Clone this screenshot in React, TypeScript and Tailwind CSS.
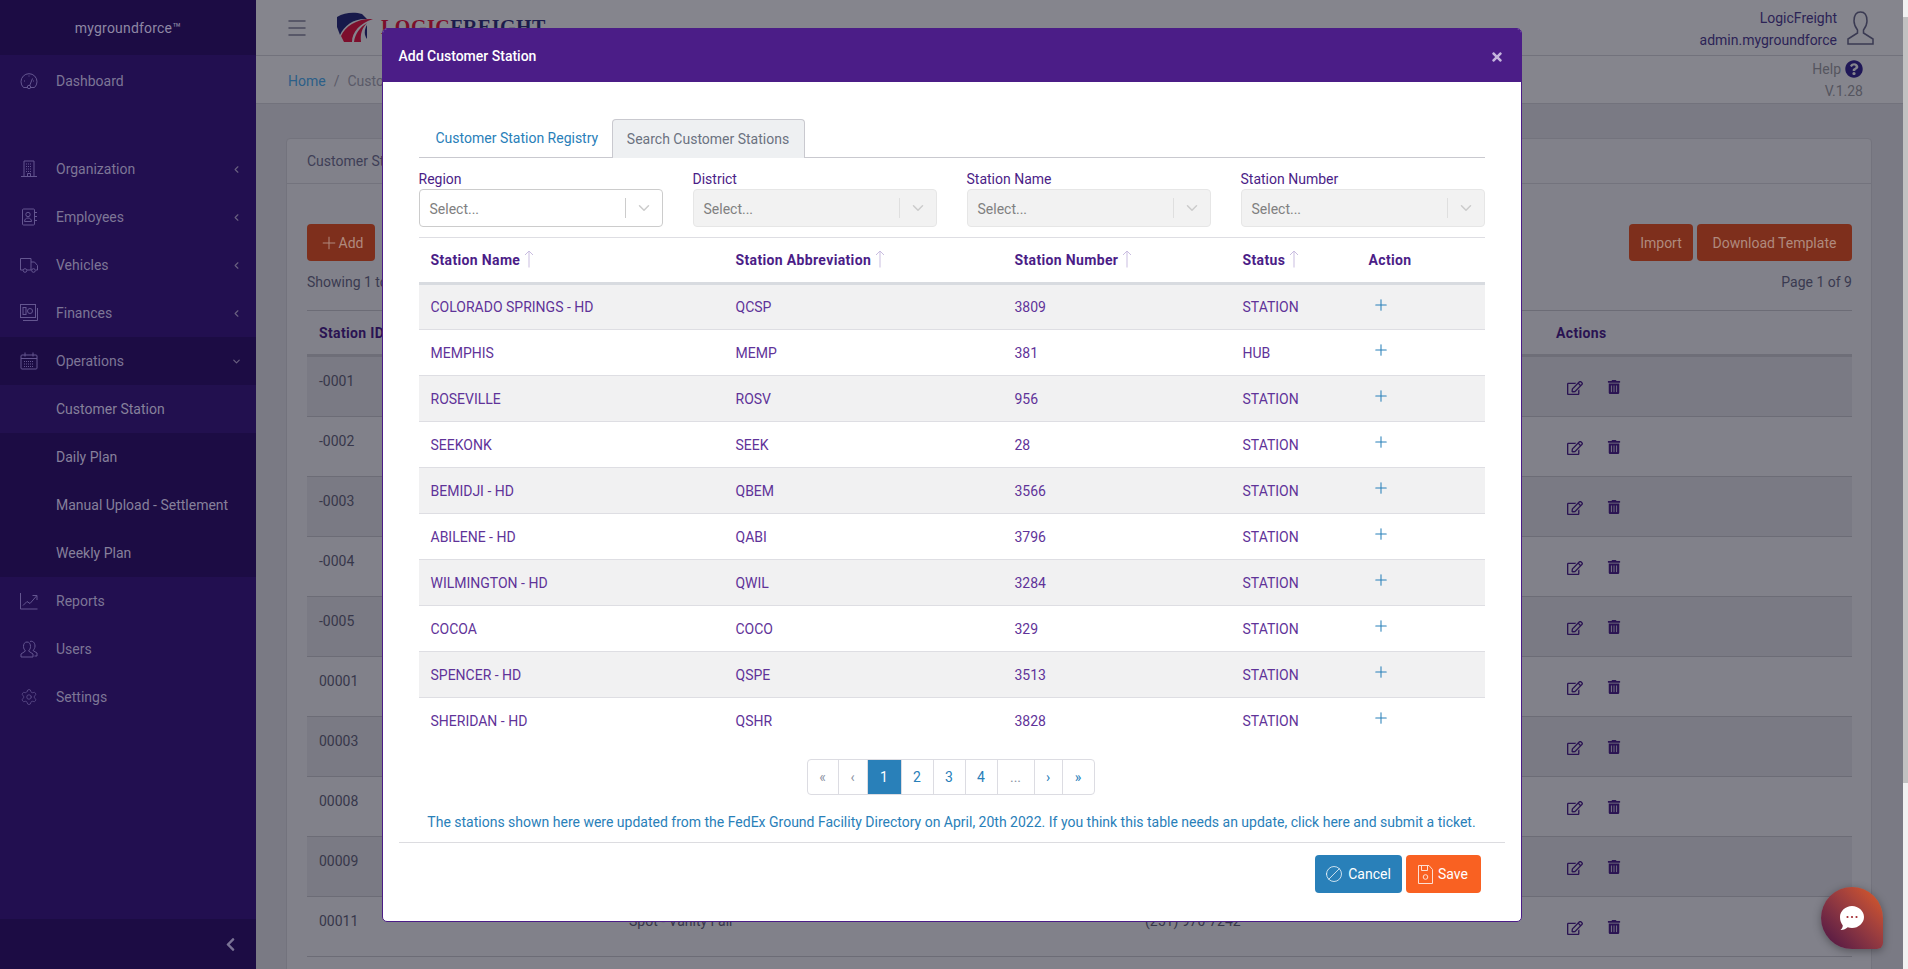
import { Ban, ChevronDown, ChevronLeft, Menu, Plus, Settings } from 'lucide-react';
import { FaChevronLeft, FaQuestionCircle, FaRegEdit, FaTimes, FaTrashAlt } from 'react-icons/fa';

const stations = [
  ['COLORADO SPRINGS - HD', 'QCSP', '3809', 'STATION'],
  ['MEMPHIS', 'MEMP', '381', 'HUB'],
  ['ROSEVILLE', 'ROSV', '956', 'STATION'],
  ['SEEKONK', 'SEEK', '28', 'STATION'],
  ['BEMIDJI - HD', 'QBEM', '3566', 'STATION'],
  ['ABILENE - HD', 'QABI', '3796', 'STATION'],
  ['WILMINGTON - HD', 'QWIL', '3284', 'STATION'],
  ['COCOA', 'COCO', '329', 'STATION'],
  ['SPENCER - HD', 'QSPE', '3513', 'STATION'],
  ['SHERIDAN - HD', 'QSHR', '3828', 'STATION'],
];

const backIds = ['-0001', '-0002', '-0003', '-0004', '-0005', '00001', '00003', '00008', '00009', '00011'];

const Line = ({ children }: { children: React.ReactNode }) => (
  <svg width="18" height="18" viewBox="0 0 18 18" fill="none" stroke="currentColor" strokeWidth="1">
    {children}
  </svg>
);

const DashboardIcon = () => (
  <Line>
    <path d="M3.500 15.500a8 8 0 1 1 11 0H11M7 15.500H3.500" />
    <circle cx="9" cy="15" r="1.700" />
    <path d="M9.700 13.500L12.500 6.500M4 9h1M9 3.500v1M14 9h-1" />
  </Line>
);

const BuildingIcon = () => (
  <Line>
    <path d="M4 16.500V1h10v15.500M1 16.500h16M7.500 16.500v-3h3v3" />
    <path d="M6 4h6M6 6.500h6M6 9h6M6 11.500h6" strokeDasharray="1 1" />
  </Line>
);

const EmployeesIcon = () => (
  <Line>
    <rect x="2.500" y="1" width="12" height="16" rx="1" />
    <path d="M14.500 4.500h2.500M14.500 8.500h2.500M14.500 12.500h2.500" />
    <circle cx="8" cy="6.500" r="2.200" />
    <path d="M4.500 13.500c0-2.200 1.500-3.500 3.500-3.500s3.500 1.300 3.500 3.500z" />
  </Line>
);

const TruckIcon = () => (
  <Line>
    <path d="M3 14H.5V2.500h10.500V14H7M11 6h3.500l3 3.500V14h-1.500M11 14h.5" />
    <circle cx="5" cy="14.500" r="1.800" />
    <circle cx="13.500" cy="14.500" r="1.800" />
  </Line>
);

const FinanceIcon = () => (
  <Line>
    <rect x="0.500" y="0.500" width="15" height="13" />
    <rect x="3" y="3.500" width="3" height="7" />
    <circle cx="10" cy="7" r="2.500" />
    <path d="M3 16.500h14.500V4" />
  </Line>
);

const CalendarIcon = () => (
  <Line>
    <rect x="1" y="3" width="16" height="14" rx="1" />
    <path d="M5 .5v4M13 .5v4M1 6.500h16" />
    <path d="M4 9.500h10M4 12h10M4 14.500h10" strokeDasharray="1 1" />
  </Line>
);

const ReportsIcon = () => (
  <Line>
    <path d="M.5 1v16h17" />
    <path d="M3 13.500l4-4 3 2 6.500-7.500M12.500 3.500h4.500V8" />
  </Line>
);

const UsersIcon = () => (
  <Line>
    <path d="M7 2C4.500 2 3.500 4 3.500 6.500c0 2 1 3.500 2 4.500L1 14v3h12v-3l-4.500-3c1-1 2-2.500 2-4.500C10.500 4 9.500 2 7 2z" />
    <path d="M10 1.500c2.500-1 5 1 5 4.500 0 2-1 3.500-2 4.500l4 2.500v3h-2.500" />
  </Line>
);

const SaveIcon = () => (
  <svg width="15" height="19" viewBox="0 0 15 19" fill="none" stroke="currentColor" strokeWidth="1" className="opacity-80">
    <path d="M.5.5h10.500l3.500 4v14H.5z" />
    <path d="M3.500.5v5h6v-5" />
    <circle cx="7.500" cy="12" r="2.300" />
  </svg>
);

const ProfileIcon = () => (
  <svg width="27" height="34" viewBox="0 0 27 34" fill="none" stroke="#3a3a52" strokeWidth="1.500">
    <path d="M13.500 1C9 1 7 5 7 10c0 4 2 7 3.500 9v3L1 28v5h25v-5l-9.500-6v-3C18 17 20 14 20 10c0-5-2-9-6.500-9z" />
  </svg>
);

const SortArrow = () => (
  <svg width="10" height="18" viewBox="0 0 10 18" fill="none" stroke="#c9bde0" strokeWidth="1" className="-mt-[3px]">
    <path d="M5 17.500V1M1 5l4-4 4 4" />
  </svg>
);

const Logo = () => (
  <svg width="36" height="30" viewBox="0 0 36 30" className="shrink-0">
    <path d="M0 5C8 0 18 0 25 2L30 7C18 6 7 13 3 23L0 15Z" fill="#17194a" />
    <path d="M36 7C21 6 8 14 4 24L7 30H15C15 20 23 11 36 7Z" fill="#7c0e2c" />
    <path d="M30 11C23 15 18 22 17 30H24C23 22 25 16 30 11Z" fill="#7c0e2c" />
    <path d="M30 13C27 18 27 23 30 27Z" fill="#17194a" />
  </svg>
);

const SideItem = ({ icon, label, arrow, open }: { icon: React.ReactNode; label: string; arrow?: boolean; open?: boolean }) => (
  <div className={`h-12 flex items-center pl-5 pr-[14px] text-[#7d7696] ${open ? 'bg-[#1c0c44]' : ''}`}>
    <span className="w-9 text-[#645690]">{icon}</span>
    <span className="flex-1">{label}</span>
    {arrow && (open ? <ChevronDown size={11} strokeWidth={2.500} className="text-[#6a6080]" /> : <ChevronLeft size={11} strokeWidth={2.500} className="text-[#6a6080]" />)}
  </div>
);

const SubItem = ({ label, active }: { label: string; active?: boolean }) => (
  <div className={`h-12 flex items-center pl-14 text-[#86809b] ${active ? 'bg-[#22104f]' : ''}`}>{label}</div>
);

const Sidebar = () => (
  <aside className="w-64 h-full shrink-0 flex flex-col bg-[#220f50]">
    <div className="h-[55px] mb-[2px] shrink-0 flex items-center justify-center tracking-[0.2px] bg-[#1c0c44] text-[#8e88a4]">mygroundforce™</div>
    <SideItem icon={<DashboardIcon />} label="Dashboard" />
    <div className="mt-10" />
    <SideItem icon={<BuildingIcon />} label="Organization" arrow />
    <SideItem icon={<EmployeesIcon />} label="Employees" arrow />
    <SideItem icon={<TruckIcon />} label="Vehicles" arrow />
    <SideItem icon={<FinanceIcon />} label="Finances" arrow />
    <div className="bg-[#1c0c44]">
      <SideItem icon={<CalendarIcon />} label="Operations" arrow open />
      <SubItem label="Customer Station" active />
      <SubItem label="Daily Plan" />
      <SubItem label="Manual Upload - Settlement" />
      <SubItem label="Weekly Plan" />
    </div>
    <SideItem icon={<ReportsIcon />} label="Reports" />
    <SideItem icon={<UsersIcon />} label="Users" />
    <SideItem icon={<Settings size={18} strokeWidth={1} />} label="Settings" />
    <div className="mt-auto h-[50px] flex items-center justify-end pr-[18px] bg-[#1c0c44] text-[#7a7395]">
      <FaChevronLeft size={15} />
    </div>
  </aside>
);

const BackPage = () => (
  <main className="flex-1 min-w-0 h-full flex flex-col bg-[#7a7a84]">
    <header className="h-14 shrink-0 flex items-center pl-[29px] pr-[29px] bg-[#85858d] border-b border-[#72727c]">
      <Menu size={24} strokeWidth={1.500} className="text-[#4a4a5c]" />
      <div className="ml-[28px] flex items-center self-start pt-3">
        <Logo />
        <span className="ml-2 font-['Liberation_Serif',serif] font-bold text-[20px] leading-none tracking-[0.5px] text-[#7c0f2b]">
          LOGIC<span className="text-[#1c1c4c]">FREIGHT</span>
        </span>
      </div>
      <div className="ml-auto flex items-center gap-[10px] text-right text-[#2c2356]">
        <div className="leading-[22px] pt-[2px]">
          <div>LogicFreight</div>
          <div>admin.mygroundforce</div>
        </div>
        <ProfileIcon />
      </div>
    </header>
    <div className="h-12 shrink-0 flex items-center justify-between pl-8 pr-[40px] bg-[#85858d] border-b border-[#72727c]">
      <div className="pt-[2px] text-[#5a5a68]">
        <span className="text-[#2c5f88]">Home</span>
        <span className="mx-2">/</span>
        Customer Station
      </div>
      <div className="text-right text-[#55555f] leading-[22px]">
        <div className="flex items-center justify-end gap-1">
          Help <FaQuestionCircle size={18} className="text-[#1f1757]" />
        </div>
        <div>V.1.28</div>
      </div>
    </div>
    <section className="mt-[34px] ml-[30px] mr-[31px] h-[900px] shrink-0 bg-[#81818a] border border-[#73737d] rounded-t">
      <div className="h-[45px] flex items-center pl-5 border-b border-[#73737d] text-[#3e3e56]">Customer Station</div>
      <div className="pl-5 pr-[19px] pt-10">
        <div className="flex items-center gap-1 h-[37px]">
          <button className="h-[37px] w-[68px] rounded bg-[#7e2f1c] text-[#b08a7e] flex items-center justify-center">
            <Plus size={20} strokeWidth={1.200} />
            Add
          </button>
          <button className="ml-auto h-[37px] w-16 rounded bg-[#7e2f1c] text-[#b08a7e]">Import</button>
          <button className="h-[37px] w-[155px] rounded bg-[#7e2f1c] text-[#b08a7e]">Download Template</button>
        </div>
        <div className="mt-2 h-[26px] flex items-center justify-between text-[#3a3a50]">
          <span>Showing 1 to 10</span>
          <span>Page 1 of 9</span>
        </div>
        <div className="mt-[15px] border-t border-[#6c6c76]">
          <div className="h-[46px] flex items-center pl-3 border-b-[3px] border-[#6e6e78] font-bold tracking-[0.35px] text-[#2a1352]">
            <span className="flex-1">Station ID</span>
            <span className="w-[296px]">Actions</span>
          </div>
          {backIds.map((id, i) => (
            <div key={id} className={`h-[60px] flex pl-3 pt-[14px] border-b border-[#6c6c76] text-[#37374a] ${i % 2 === 0 ? 'bg-[#7a7a84]' : ''}`}>
              <span className="w-[310px]">{id}</span>
              <span className="w-[516px]">{i === 9 ? 'Spot - Vanity Fair' : ''}</span>
              <span className="w-[411px]">{i === 9 ? '(251) 970-7242' : ''}</span>
              <span className="w-[40px] h-fit -mt-px pl-[11px] pt-[10px] text-[#2a1352]"><FaRegEdit size={16} /></span>
              <span className="h-fit -mt-px pl-[11px] pt-[10px] text-[#2a1352]"><FaTrashAlt size={14} /></span>
            </div>
          ))}
        </div>
      </div>
    </section>
  </main>
);

const FilterSelect = ({ label, disabled }: { label: string; disabled?: boolean }) => (
  <div>
    <div className="h-[22px] leading-[22px] -mb-[1px] text-[#4b1d87]">{label}</div>
    <div className={`h-[38px] flex items-center rounded border ${disabled ? 'bg-[#f2f2f2] border-[#e6e6e6]' : 'bg-white border-[#cccccc]'}`}>
      <span className="flex-1 pl-[10px] pt-[1px] text-[#808080]">Select...</span>
      <span className={`w-px h-5 ${disabled ? 'bg-[#dfdfdf]' : 'bg-[#cccccc]'}`} />
      <ChevronDown size={18} strokeWidth={2} className="mx-[9px] text-[#cccccc]" />
    </div>
  </div>
);

const SortHead = ({ label, className }: { label: string; className: string }) => (
  <th className={`${className} pl-3 text-left font-bold tracking-[0.35px]`}>
    <span className="inline-flex items-center gap-1">
      {label}
      <SortArrow />
    </span>
  </th>
);

const pages = [
  { label: '«', w: 'w-[31px]', muted: true },
  { label: '‹', w: 'w-[29px]', muted: true },
  { label: '1', w: 'w-[34px]', active: true },
  { label: '2', w: 'w-[32px]' },
  { label: '3', w: 'w-[32px]' },
  { label: '4', w: 'w-[32px]' },
  { label: '...', w: 'w-[37px]', muted: true },
  { label: '›', w: 'w-[28px]' },
  { label: '»', w: 'w-[31px]' },
];

const StationModal = () => (
  <div className="absolute inset-0 z-10 flex justify-center pt-7">
    <div className="w-[1140px] h-[894px] flex flex-col bg-white border border-[#4b1d87] rounded-[5px] overflow-hidden">
      <div className="h-[54px] -mt-px -mx-px shrink-0 flex items-center justify-between pl-[17px] pr-[18px] bg-[#4b1d87] text-white">
        <span className="font-medium pt-[2px]">Add Customer Station</span>
        <FaTimes size={14} className="text-[#c4b4dc] mt-[4px]" />
      </div>
      <div className="flex-1 px-9 pt-[37px]">
        <div className="h-[39px] flex items-end border-b border-[#c9c9cf] pl-px">
          <div className="h-[38px] w-[192px] flex items-center pl-4 text-[#2980b9]">Customer Station Registry</div>
          <div className="h-[39px] w-[193px] -mb-px flex items-center justify-center rounded-t border border-b-0 border-[#c9c9cf] bg-[#eef0f2] text-[#6b7280]">
            Search Customer Stations
          </div>
        </div>
        <div className="mt-[10px] grid grid-cols-4 gap-[30px]">
          <FilterSelect label="Region" />
          <FilterSelect label="District" disabled />
          <FilterSelect label="Station Name" disabled />
          <FilterSelect label="Station Number" disabled />
        </div>
        <table className="mt-[10px] w-full table-fixed border-t border-[#dedee3] border-collapse">
          <thead>
            <tr className="h-[46px] text-[#4b1d87] border-b-[3px] border-[#d8dbe0]">
              <SortHead label="Station Name" className="w-[305px]" />
              <SortHead label="Station Abbreviation" className="w-[279px]" />
              <SortHead label="Station Number" className="w-[228px]" />
              <SortHead label="Status" className="w-[126px]" />
              <th className="pl-3 text-left font-bold tracking-[0.35px]">Action</th>
            </tr>
          </thead>
          <tbody>
            {stations.map((row, i) => (
              <tr key={row[0]} className={`h-[46px] text-[#5f3399] ${i < 9 ? 'border-b border-[#dedee3]' : ''} ${i % 2 === 0 ? 'bg-[#f1f1f2]' : ''}`}>
                {row.map((cell) => (
                  <td key={cell} className="pl-3">{cell}</td>
                ))}
                <td className="pl-[15px]">
                  <Plus size={18} strokeWidth={1.400} className="text-[#2980b9] -mt-[5px]" />
                </td>
              </tr>
            ))}
          </tbody>
        </table>
        <nav className="mt-[15px] pr-[2px] flex justify-center">
          <div className="flex h-9 rounded border border-[#dcdce2] overflow-hidden">
            {pages.map((p) => (
              <span
                key={p.label}
                className={`${p.w} flex items-center justify-center border-r border-[#dcdce2] last:border-r-0 ${p.active ? 'bg-[#2980b9] text-white' : p.muted ? 'text-[#8c93a3]' : 'text-[#2980b9]'}`}
              >
                {p.label}
              </span>
            ))}
          </div>
        </nav>
        <p className="mt-[17px] text-center text-[#2980b9]">
          The stations shown here were updated from the FedEx Ground Facility Directory on April, 20th 2022. If you think this table needs an update, click here and submit a ticket.
        </p>
      </div>
      <div className="mx-4 h-[79px] shrink-0 flex justify-end items-start gap-1 pt-3 pr-6 border-t border-[#dcdce0]">
        <button className="h-[38px] w-[87px] rounded bg-[#2980b9] text-white flex items-center justify-center gap-[5px]">
          <Ban size={18} strokeWidth={1} className="-scale-x-100" />
          Cancel
        </button>
        <button className="h-[38px] w-[75px] rounded bg-[#f96122] text-white flex items-center justify-center gap-[5px]">
          <SaveIcon />
          Save
        </button>
      </div>
    </div>
  </div>
);

const ChatButton = () => (
  <div className="absolute z-20 left-[1821px] top-[887px] w-[62px] h-[62px] flex items-center justify-center rounded-tl-[50%] rounded-tr-[50%] rounded-bl-[50%] rounded-br-[6px] bg-gradient-to-tr from-[#4a1143] to-[#e05c1c] shadow-[0_2px_8px_rgba(0,0,0,0.35)]">
    <svg width="26" height="26" viewBox="0 0 26 26">
      <path d="M13 1c6.500 0 12 5 12 11s-5.500 11-12 11c-1.500 0-3-.3-4.300-.7C7 24 4 25.200 1.500 25c1.500-1.300 2.200-3 2.300-4.600C2 18.200 1 15.300 1 12 1 6 6.500 1 13 1z" fill="#fff" />
      <circle cx="8.500" cy="12" r="1.100" fill="#a3282f" />
      <circle cx="13" cy="12" r="1.100" fill="#a3282f" />
      <circle cx="17.500" cy="12" r="1.100" fill="#a3282f" />
    </svg>
  </div>
);

export default function App() {
  return (
    <div className="relative w-[1908px] h-[969px] flex overflow-hidden font-['Roboto',sans-serif] text-sm">
      <div className="relative flex-1 min-w-0 h-full flex overflow-hidden">
        <Sidebar />
        <BackPage />
        <StationModal />
      </div>
      <div className="w-[5px] h-full shrink-0 bg-[#f1f1f1] pt-[17px]">
        <div className="h-[766px] bg-[#c1c1c1]" />
      </div>
      <ChatButton />
    </div>
  );
}
